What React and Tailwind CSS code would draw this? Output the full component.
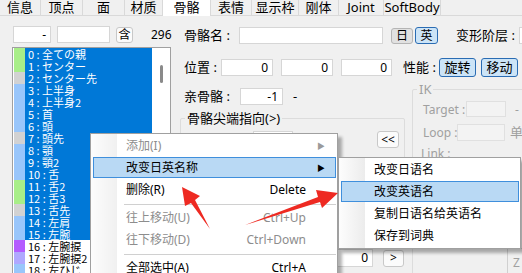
import React from 'react';

const tabs = [
  ['信息', 41], ['顶点', 42], ['面', 42], ['材质', 38], ['骨骼', 48],
  ['表情', 41], ['显示枠', 47], ['刚体', 40], ['Joint', 45], ['SoftBody', 57],
];

const green = '#a8ee88';
const gray = '#d2d2d2';
const blue = '#99c6fb';

const bones = [
  ['0', '全ての親', green],
  ['1', 'センター', green],
  ['2', 'センター先', gray],
  ['3', '上半身', blue],
  ['4', '上半身2', blue],
  ['5', '首', blue],
  ['6', '頭', blue],
  ['7', '頭先', gray],
  ['8', '顎', blue],
  ['9', '顎2', blue],
  ['10', '舌', blue],
  ['11', '舌2', green],
  ['12', '舌3', green],
  ['13', '舌先', gray],
  ['14', '左肩', blue],
  ['15', '左腕', blue],
  ['16', '左腕捩', '#b45cff'],
  ['17', '左腕捩2', '#b0a8ff'],
  ['18', '左ひじ', blue],
];

const Input = ({ className = '', children }) => (
  <div className={`h-[17px] bg-white border border-[#d6d6d6] text-right pr-[4px] text-[12px] leading-[15px] ${className}`}>
    {children}
  </div>
);

const Btn = ({ className = '', children }) => (
  <div className={`flex items-center justify-center rounded-[3px] border text-[12px] leading-none ${className}`}>
    {children}
  </div>
);

const MenuItem = ({ label, shortcut, disabled, active, arrow }) => (
  <div className="h-[22px] px-[2px] pr-[1px]">
    <div
      className={`h-[21px] flex items-center border leading-[16px] ${
        active ? 'bg-[#b9d9f4] border-[#3f8fdc]' : 'border-transparent'
      } ${disabled ? 'text-[#8d8d8d]' : 'text-black'}`}
    >
      <span className="ml-[32px] flex-1 whitespace-nowrap">{label}</span>
      {shortcut && <span className="mr-[29px] whitespace-nowrap">{shortcut}</span>}
      {arrow && (
        <span className={`mr-[10px] text-[8px] ${disabled ? 'text-[#9a9a9a]' : 'text-black'}`}>▶</span>
      )}
    </div>
  </div>
);

const Sep = () => (
  <div className="h-[6px] flex items-center pl-[33px] pr-[1px]">
    <div className="h-px w-full bg-[#d0d0d0]" />
  </div>
);

export default function App() {
  return (
    <div className="w-[522px] h-[273px] overflow-hidden relative bg-[#f0f0f0] text-black text-[13px] leading-[17px] font-['Noto_Sans','Noto_Sans_CJK_SC',sans-serif]">
      {/* tab strip */}
      <div className="flex h-[16px] border-b border-[#d9d9d9]">
        {tabs.map(([t, w]) => (
          <div
            key={t}
            style={{ width: w }}
            className={`shrink-0 border-r border-[#d9d9d9] text-center leading-[15px] whitespace-nowrap ${
              t === '骨骼' ? 'bg-white h-[16px]' : 'h-[15px]'
            }`}
          >
            {t}
          </div>
        ))}
      </div>

      <div className="flex">
        {/* left column */}
        <div className="w-[178px] shrink-0 pl-[12px] pt-[10px]">
          <div className="flex items-center h-[17px]">
            <Input className="w-[38px] ml-[1px]">-</Input>
            <Input className="w-[53px] ml-[6px]" />
            <Btn className="w-[17px] h-[16px] ml-[6px] bg-[#fbfbfb] border-[#c8c8c8] text-[11px]">含</Btn>
            <div className="ml-[18px] text-[12px]">296</div>
          </div>
          <div className="mt-[4px] w-[159px] h-[240px] bg-white border border-[#a0a0a0] flex font-['Noto_Sans_CJK_JP',sans-serif] text-[11px]">
            <div className="flex flex-col">
              {bones.map(([n, name, c], i) => (
                <div key={n} className="flex h-[12px]">
                  <div className="w-[11px] ml-[1px]" style={{ backgroundColor: c }} />
                  <div
                    className={`w-[127px] pl-[3px] leading-[12px] whitespace-nowrap ${
                      i < 16 ? 'bg-[#0078d7] text-white' : 'text-black'
                    }`}
                  >
                    {n} : {name}
                  </div>
                </div>
              ))}
            </div>
            <div className="pt-[17px] pl-[8px]">
              <div className="w-[3px] h-[18px] rounded-full bg-[#8a8a8a]" />
            </div>
          </div>
        </div>

        {/* right column */}
        <div className="flex-1 pt-[11px]">
          <div className="flex items-center h-[17px]">
            <div className="ml-[6px] w-[55px] whitespace-nowrap">骨骼名 :</div>
            <Input className="w-[144px]" />
            <Btn className="ml-[8px] w-[22px] h-[16px] bg-[#e1e1e1] border-[#b5b5b5]">日</Btn>
            <Btn className="ml-[2px] w-[23px] h-[17px] bg-[#cce4f7] border-[#2a6cb3]">英</Btn>
            <div className="ml-[18px] whitespace-nowrap">变形阶层 :</div>
            <Input className="ml-[4px] w-[40px] shrink-0" />
          </div>

          <div className="flex items-center h-[19px] mt-[14px]">
            <div className="ml-[6px] w-[37px] whitespace-nowrap">位置 :</div>
            <Input className="w-[52px] h-[16px]">0</Input>
            <Input className="ml-[8px] w-[52px] h-[16px]">0</Input>
            <Input className="ml-[8px] w-[51px] h-[16px]">0</Input>
            <div className="ml-[11px] w-[36px] whitespace-nowrap">性能 :</div>
            <Btn className="w-[37px] h-[19px] bg-[#cce4f7] border-[#2a6cb3] text-[13px]">旋转</Btn>
            <Btn className="ml-[5px] w-[37px] h-[19px] bg-[#cce4f7] border-[#2a6cb3] text-[13px]">移动</Btn>
          </div>

          <div className="flex">
            <div className="w-[234px] shrink-0">
              <div className="flex items-center h-[17px] mt-[11px]">
                <div className="ml-[6px] w-[56px] whitespace-nowrap">亲骨骼 :</div>
                <Input className="w-[43px]">-1</Input>
                <div className="ml-[10px]">-</div>
              </div>
              {/* group box: bone tip */}
              <div className="ml-[2px] mt-[13px] w-[225px] h-[126px] border border-[#dcdcdc] rounded-[2px]">
                <div className="-mt-[9px] ml-[4px] px-[2px] w-fit bg-[#f0f0f0] leading-[16px] whitespace-nowrap">骨骼尖端指向(&gt;)</div>
                <div className="flex items-start mt-[5px]">
                  <Input className="ml-[72px] w-[40px]" />
                  <Btn className="ml-auto mr-[5px] w-[22px] h-[17px] bg-[#fbfbfb] border-[#c8c8c8] text-[11px]">&lt;&lt;</Btn>
                </div>
              </div>
              <div className="flex items-center mt-[5px]">
                <Input className="ml-[110px] w-[85px] h-[18px]">0</Input>
                <Btn className="ml-[10px] w-[21px] h-[17px] bg-[#fbfbfb] border-[#c8c8c8]">&gt;</Btn>
              </div>
            </div>

            {/* group box: IK */}
            <div className="mt-[12px] w-[130px] h-[200px] shrink-0 border border-[#dcdcdc] rounded-[2px] text-[#a0a0a0] text-[12px]">
              <div className="-mt-[9px] ml-[4px] px-[2px] w-fit bg-[#f0f0f0] leading-[16px] text-[13px]">IK</div>
              <div className="flex items-center h-[16px] mt-[4px]">
                <div className="ml-[10px] w-[43px] whitespace-nowrap">Target :</div>
                <div className="w-[40px] h-[16px] border border-[#e0e0e0] bg-[#f3f3f3]" />
                <div className="ml-[9px]">-</div>
              </div>
              <div className="flex items-center h-[17px] mt-[7px]">
                <div className="ml-[10px] w-[34px] whitespace-nowrap">Loop :</div>
                <div className="w-[48px] h-[17px] border border-[#e0e0e0] bg-[#f3f3f3]" />
                <div className="ml-[5px] text-[13px]">单</div>
              </div>
              <div className="flex items-center h-[14px] mt-[5px]">
                <div className="ml-[8px] whitespace-nowrap">Link :</div>
              </div>
              <div className="flex mt-[88px]">
                <div className="ml-[94px] w-[30px] h-[30px] border-l border-t border-[#d0d0d0] pl-[5px] pt-[8px] leading-none">Z</div>
              </div>
            </div>
          </div>
        </div>
      </div>

      {/* context menu */}
      <div className="absolute left-[90px] top-[133px] w-[248px] h-[150px] bg-white border border-[#a0a0a0] shadow-[4px_4px_3px_rgba(0,0,0,0.3)] text-[12px] pt-[1px]">
        <div className="absolute left-0 top-0 w-[26px] h-full bg-gradient-to-r from-[#fdfdfd] to-[#f0f0f0]" />
        <div className="relative">
          <MenuItem label="添加(I)" disabled arrow />
          <MenuItem label="改变日英名称" active arrow />
          <MenuItem label="删除(R)" shortcut="Delete" />
          <Sep />
          <MenuItem label="往上移动(U)" shortcut="Ctrl+Up" disabled />
          <MenuItem label="往下移动(D)" shortcut="Ctrl+Down" disabled />
          <Sep />
          <MenuItem label="全部选中(A)" shortcut="Ctrl+A" />
        </div>
      </div>

      {/* submenu */}
      <div className="absolute left-[338px] top-[157px] w-[183px] h-[92px] bg-white border border-[#a0a0a0] shadow-[4px_4px_3px_rgba(0,0,0,0.3)] text-[12px] pt-[1px]">
        <div className="absolute left-0 top-0 w-[26px] h-full bg-gradient-to-r from-[#fdfdfd] to-[#ececec]" />
        <div className="relative">
          <MenuItem label="改变日语名" />
          <MenuItem label="改变英语名" active />
          <MenuItem label="复制日语名给英语名" />
          <MenuItem label="保存到词典" />
        </div>
      </div>

      {/* red callout arrows */}
      <svg className="absolute left-0 top-0 pointer-events-none" width="522" height="273">
        <polygon points="182,187 200,196 195,200 210,229 191,203 185,206" fill="#ee2a22" />
        <polygon points="338,193 316,190 318,197 245,225 320,202 322,208" fill="#ee2a22" />
      </svg>
    </div>
  );
}
